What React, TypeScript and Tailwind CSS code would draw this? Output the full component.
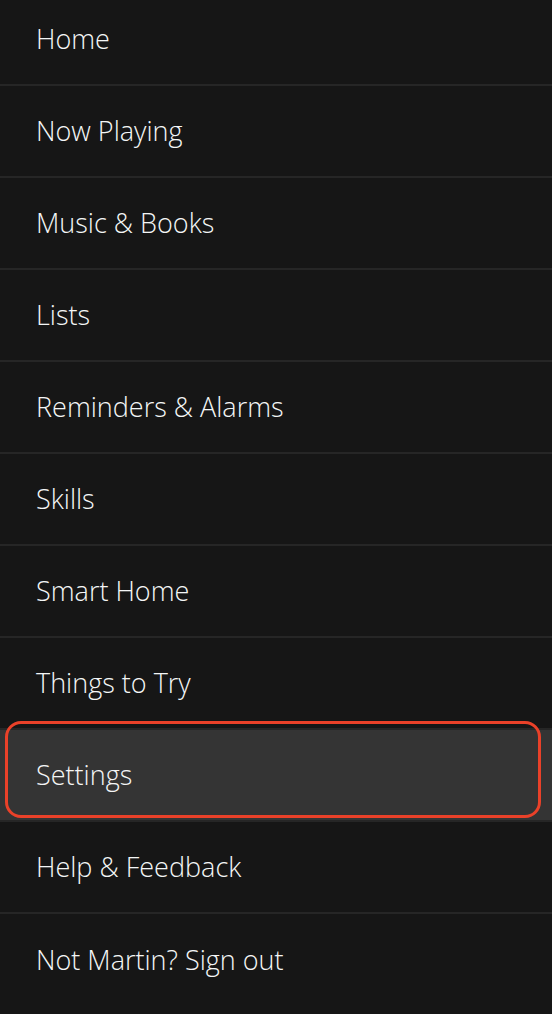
const ITEMS = [
  'Home',
  'Now Playing',
  'Music & Books',
  'Lists',
  'Reminders & Alarms',
  'Skills',
  'Smart Home',
  'Things to Try',
  'Settings',
  'Help & Feedback',
  'Not Martin? Sign out',
]

export default function App() {
  return (
    <div className="h-[1014px] w-[552px] overflow-hidden bg-[#161616]" style={{ fontFamily: '"Open Sans", "Noto Sans", sans-serif' }}>
      <ul className="-mt-1.5">
        {ITEMS.map((label) => {
          const active = label === 'Settings'
          return (
            <li
              key={label}
              className={`relative flex h-[92px] items-center border-b-2 border-[#262626] pl-9 last:border-b-0 ${active ? 'bg-[#343434]' : ''}`}
            >
              <span className="text-[27px] font-light text-[#f4f6f6]">{label}</span>
              {active && (
                <div className="pointer-events-none absolute top-[-9px] bottom-[2px] left-[5px] right-[11px] rounded-[16px] border-[3px] border-[#ea4129]" />
              )}
            </li>
          )
        })}
      </ul>
    </div>
  )
}
